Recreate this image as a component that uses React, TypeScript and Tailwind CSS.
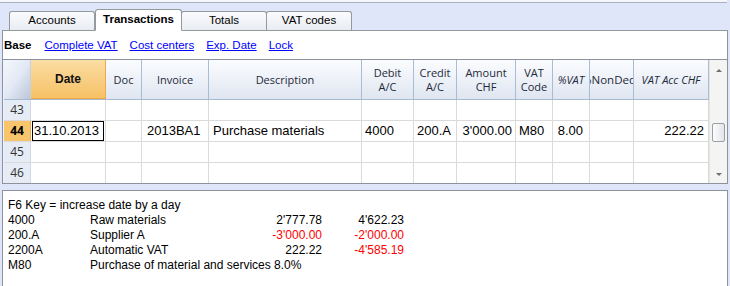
import React from 'react';

type Col = { key: string; w: string; label: React.ReactNode; align?: 'left' | 'right'; pad?: string };

const cols: Col[] = [
  { key: 'date', w: 'w-[75px]', label: 'Date' },
  { key: 'doc', w: 'w-[36px]', label: 'Doc' },
  { key: 'inv', w: 'w-[67px]', label: 'Invoice', pad: 'pl-[5px]' },
  { key: 'desc', w: 'w-[153px]', label: 'Description', pad: 'pl-[4px]' },
  { key: 'deb', w: 'w-[52px]', label: <>Debit<br />A/C</>, pad: 'pl-[3px]' },
  { key: 'cre', w: 'w-[43px]', label: <>Credit<br />A/C</>, pad: 'pl-[3px]' },
  { key: 'amt', w: 'w-[59px]', label: <>Amount<br />CHF</>, align: 'right', pad: 'pr-[3px]' },
  { key: 'vc', w: 'w-[37px]', label: <>VAT<br />Code</>, pad: 'pl-[3px]' },
  { key: 'pv', w: 'w-[37px]', label: <i>%VAT</i>, align: 'right', pad: 'pr-[6px]' },
  { key: 'nd', w: 'w-[44px]', label: '%NonDed' },
  { key: 'va', w: 'w-[75px]', label: <i>VAT Acc CHF</i>, align: 'right', pad: 'pr-[4px]' },
];

const row44: Record<string, string> = {
  date: '31.10.2013',
  inv: '2013BA1',
  desc: 'Purchase materials',
  deb: '4000',
  cre: '200.A',
  amt: "3'000.00",
  vc: 'M80',
  pv: '8.00',
  va: '222.22',
};

const ui = { fontFamily: '"Liberation Sans", Arial, sans-serif' };
const seg = { fontFamily: '"Open Sans", "Noto Sans", sans-serif' };

function Tab({ label, active }: { label: string; active?: boolean }) {
  if (active) {
    return (
      <div className="w-[87px] h-[22px] -mb-px bg-white border border-b-white border-[#919b9c] rounded-t-[3px] flex items-center justify-center font-bold text-[11.5px] text-black">
        {label}
      </div>
    );
  }
  return (
    <div className="w-[86px] h-[19px] -ml-px first:ml-0 bg-gradient-to-b from-[#fbfbfd] to-[#e9ecf3] border border-b-0 border-[#919b9c] rounded-t-[3px] flex items-center justify-center text-[11.5px] text-black">
      {label}
    </div>
  );
}

function Scrollbar() {
  return (
    <div className="w-[18px] bg-[#f4f4f2] border-l border-[#e4e4e4] flex flex-col items-center">
      <div className="h-[21px] flex items-center justify-center">
        <div className="w-0 h-0 border-l-[3px] border-r-[3px] border-b-[3px] border-l-transparent border-r-transparent border-b-[#707070]" />
      </div>
      <div className="h-[42px]" />
      <div className="w-[13px] h-[19px] border border-[#9aa0a8] rounded-[2px] bg-gradient-to-r from-[#fdfdfd] to-[#e2e4e8]" />
      <div className="flex-1" />
      <div className="h-[18px] flex items-center justify-center">
        <div className="w-0 h-0 border-l-[3px] border-r-[3px] border-t-[3px] border-l-transparent border-r-transparent border-t-[#707070]" />
      </div>
    </div>
  );
}

function Grid() {
  const rows = [43, 44, 45, 46];
  return (
    <div className="flex h-[124px] border-b border-[#8d939c]">
      <div className="w-px bg-[#eef1f6]" />
      <div className="flex flex-col">
        {/* header */}
        <div className="flex h-[40px] border-b border-[#a7b9d0]" style={seg}>
          <div className="w-[27px] bg-gradient-to-br from-[#f4f7fc] via-[#e3e9f5] to-[#b9c6d8] border-r border-[#c5d1e0]" />
          {cols.map((c) =>
            c.key === 'date' ? (
              <div
                key={c.key}
                className={`${c.w} bg-gradient-to-b from-[#fadda2] to-[#f6c165] border-r border-b border-[#f0a848] flex items-center justify-center font-bold text-[12px] text-[#111]`}
                style={ui}
              >
                {c.label}
              </div>
            ) : c.key === 'nd' ? (
              <div
                key={c.key}
                className={`${c.w} bg-gradient-to-b from-[#fbfcfe] to-[#dfe6f1] border-r border-[#a8bcd5] flex items-center justify-end overflow-hidden whitespace-nowrap text-[11.5px] text-[#1e2a3a]`}
              >
                <span className="shrink-0 -mr-[3px]">{c.label}</span>
              </div>
            ) : (
              <div
                key={c.key}
                className={`${c.w} bg-gradient-to-b from-[#fbfcfe] to-[#dfe6f1] border-r border-[#a8bcd5] flex items-center justify-center overflow-hidden whitespace-nowrap text-center text-[11px] leading-[14px] text-[#1e2a3a]`}
              >
                <span className="shrink-0">{c.label}</span>
              </div>
            )
          )}
        </div>
        {/* body */}
        {rows.map((n) => {
          const sel = n === 44;
          return (
            <div key={n} className={`flex ${n === 46 ? 'h-[20px]' : 'h-[21px] border-b border-[#dadada]'}`}>
              <div
                className={`w-[27px] flex items-center justify-center text-[12px] border-r ${
                  sel ? 'bg-[#f8c56c] font-bold border-[#f0a848] text-black' : 'bg-[#e5ecf6] border-[#d0d8e4] text-[#333]'
                }`}
                style={seg}
              >
                {n}
              </div>
              {cols.map((c) => (
                <div
                  key={c.key}
                  className={`${c.w} border-r border-[#dadada] flex items-center text-[13px] text-black whitespace-nowrap overflow-hidden ${
                    c.align === 'right' ? 'justify-end' : 'justify-start'
                  } ${c.pad ?? ''}`}
                  style={ui}
                >
                  {sel && c.key === 'date' ? (
                    <div className="ml-[1px] w-[72px] h-[20px] border border-black flex items-center pl-[1px]">{row44.date}</div>
                  ) : sel ? (
                    row44[c.key] ?? ''
                  ) : (
                    ''
                  )}
                </div>
              ))}
            </div>
          );
        })}
      </div>
      <Scrollbar />
    </div>
  );
}

export default function App() {
  return (
    <div className="w-[730px] h-[286px] bg-[#dfe6fa] flex flex-col overflow-hidden" style={ui}>
      <div className="h-[3px] bg-[#f5f7fc] border-b border-[#a9b0bd] mr-[3px]" />
      {/* tab strip */}
      <div className="h-[28px] flex items-end pl-[7px] ml-[2px] w-[726px] border-b border-[#919b9c]">
        <Tab label="Accounts" />
        <Tab label="Transactions" active />
        <div className="-ml-px flex items-end">
          <Tab label="Totals" />
          <Tab label="VAT codes" />
        </div>
      </div>
      {/* main frame */}
      <div className="ml-[2px] w-[726px] border-l border-r border-[#8d939c] bg-white">
        <div className="h-[29px] flex items-center gap-[12px] pl-[1px] pt-[1px] text-[11.5px] border-b border-[#8d939c]">
          <span className="font-bold text-black">Base</span>
          <span className="text-[#0000ff] underline ml-[1px]">Complete VAT</span>
          <span className="text-[#0000ff] underline">Cost centers</span>
          <span className="text-[#0000ff] underline">Exp. Date</span>
          <span className="text-[#0000ff] underline">Lock</span>
        </div>
        <Grid />
      </div>
      <div className="h-[6px]" />
      {/* info panel */}
      <div className="flex-1 ml-[2px] w-[726px] bg-white border-t border-l border-r border-[#8d939c] pl-[5px] pt-[7px] text-[12px] leading-[15px] text-black">
        <div>F6 Key = increase date by a day</div>
        <div className="grid grid-cols-[82px_160px_72px_82px]">
          <div>4000</div>
          <div>Raw materials</div>
          <div className="text-right">2'777.78</div>
          <div className="text-right">4'622.23</div>
          <div>200.A</div>
          <div>Supplier A</div>
          <div className="text-right text-[#ff0000]">-3'000.00</div>
          <div className="text-right text-[#ff0000]">-2'000.00</div>
          <div>2200A</div>
          <div>Automatic VAT</div>
          <div className="text-right">222.22</div>
          <div className="text-right text-[#ff0000]">-4'585.19</div>
          <div>M80</div>
          <div className="col-span-3 whitespace-nowrap">Purchase of material and services 8.0%</div>
        </div>
      </div>
    </div>
  );
}
